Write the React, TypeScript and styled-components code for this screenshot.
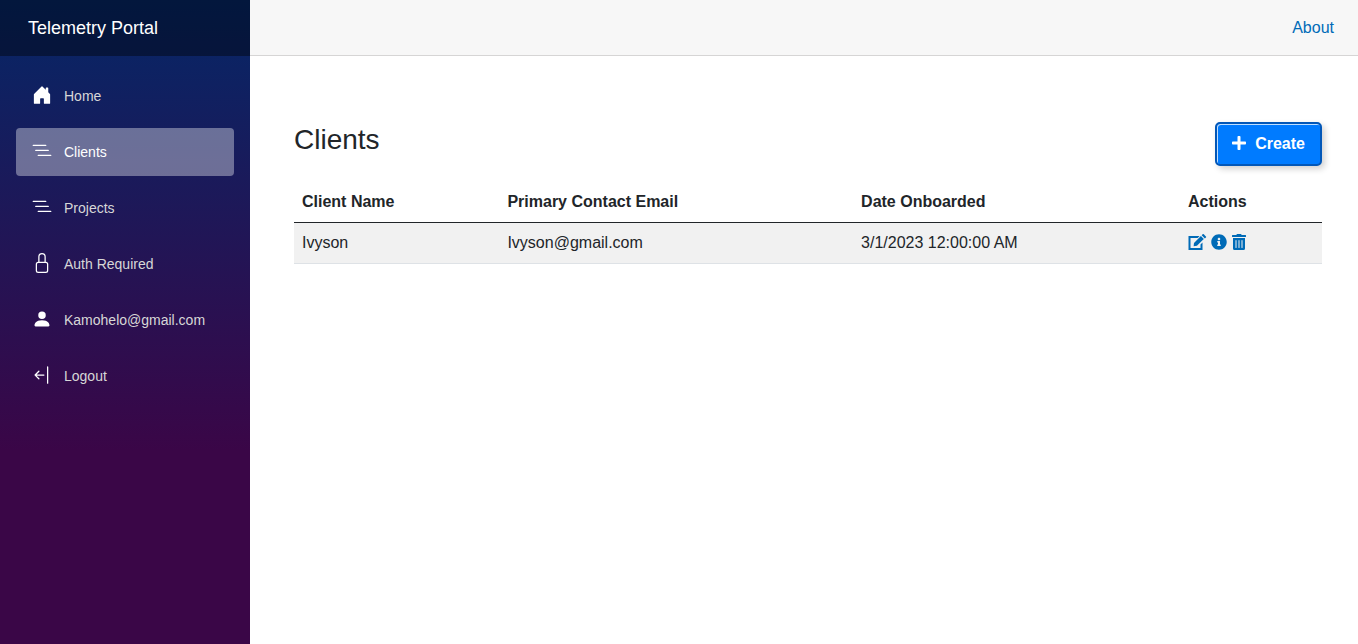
import React from "react";
import styled, { createGlobalStyle, css } from "styled-components";
import { BsArrowBarLeft, BsHouseDoorFill, BsListNested, BsLock, BsPersonFill } from "react-icons/bs";
import { FaInfoCircle, FaPlus, FaTrashAlt } from "react-icons/fa";

const GlobalStyle = createGlobalStyle`
  *, *::before, *::after { box-sizing: border-box; }
  body {
    margin: 0;
    font-family: "Liberation Sans", Arial, sans-serif;
    font-size: 16px;
    line-height: 24px;
    color: #212529;
    background: #fff;
  }
`;

const Page = styled.div`
  display: flex;
  min-height: 100vh;
`;

const Sidebar = styled.aside`
  flex: 0 0 250px;
  background-image: linear-gradient(180deg, rgb(5, 39, 103) 0%, #3a0647 70%);
`;

const BrandBar = styled.div`
  display: flex;
  align-items: center;
  height: 56px;
  padding: 0 28px;
  background: rgba(0, 0, 0, 0.4);
`;

const Brand = styled.a`
  font-size: 18px;
  color: #fff;
  text-decoration: none;
`;

const NavList = styled.ul`
  display: grid;
  gap: 8px;
  margin: 0;
  padding: 16px;
  list-style: none;
`;

const NavLink = styled.a<{ $active?: boolean }>`
  display: flex;
  align-items: center;
  gap: 12px;
  height: 48px;
  padding: 0 16px;
  border-radius: 4px;
  font-size: 14px;
  color: #d7d7d7;
  text-decoration: none;
  ${(p) =>
    p.$active &&
    css`
      color: #fff;
      background: rgba(255, 255, 255, 0.37);
    `}

  svg {
    width: 20px;
    height: 20px;
    margin-bottom: 2px;
    color: #fff;
  }
`;

const Main = styled.main`
  flex: 1;
  min-width: 0;
`;

const TopRow = styled.header`
  display: flex;
  align-items: center;
  justify-content: flex-end;
  height: 56px;
  padding: 0 24px;
  background: #f7f7f7;
  border-bottom: 1px solid #d6d5d5;
`;

const TextLink = styled.a`
  color: #006bb7;
  text-decoration: none;
`;

const Content = styled.article`
  padding: 66px 36px 24px 44px;
`;

const TitleRow = styled.div`
  display: flex;
  justify-content: space-between;
  align-items: flex-start;
  margin-bottom: 16px;
`;

const Title = styled.h3`
  margin: 0;
  font-size: 28px;
  line-height: 36px;
  font-weight: 400;
`;

const CreateButton = styled.button`
  display: flex;
  align-items: center;
  gap: 8px;
  height: 44px;
  padding: 0 15px 0 14px;
  border: 2px solid #0257b8;
  border-radius: 5px;
  font: inherit;
  font-weight: 700;
  color: #fff;
  background: #007bff;
  box-shadow: inset 1px 1px 0 rgba(255, 255, 255, 0.75), 3px 3px 6px rgba(0, 0, 0, 0.18);

  svg {
    margin-bottom: 2px;
  }
`;

const Table = styled.table`
  width: 100%;
  border-collapse: collapse;
  text-align: left;

  th,
  td {
    padding: 8px;
    border-bottom: 1px solid #dee2e6;
  }

  thead th {
    border-bottom-color: #212529;
  }

  tbody tr:nth-of-type(odd) {
    background: #f1f1f1;
  }
`;

const Actions = styled.div`
  display: flex;
  align-items: center;
  gap: 4px;
  height: 24px;
  padding-bottom: 2px;
`;

const ActionLink = styled(TextLink)`
  display: flex;
`;

const EditIcon = () => (
  <svg width="19" height="16" viewBox="0 0 19 16" fill="currentColor" aria-hidden="true">
    <path d="M.5 2H11.6L9.6 4H2.5V14H12.5V10.6L14.5 8.6V16H.5Z" />
    <path d="M6 8.9L12.9 2L15.8 4.9L8.9 11.8L5.6 12.2Z" />
    <path d="M13.7 1.2L14.6.3Q15.2-.2 15.8.3L17.9 2.4Q18.5 3 17.9 3.6L16.9 4.4Z" />
  </svg>
);

const navItems = [
  { label: "Home", Icon: BsHouseDoorFill },
  { label: "Clients", Icon: BsListNested, active: true },
  { label: "Projects", Icon: BsListNested },
  { label: "Auth Required", Icon: BsLock },
  { label: "Kamohelo@gmail.com", Icon: BsPersonFill },
  { label: "Logout", Icon: BsArrowBarLeft },
];

const clients = [{ name: "Ivyson", email: "Ivyson@gmail.com", onboarded: "3/1/2023 12:00:00 AM" }];

export default function App() {
  return (
    <Page>
      <GlobalStyle />
      <Sidebar>
        <BrandBar>
          <Brand href="#">Telemetry Portal</Brand>
        </BrandBar>
        <nav>
          <NavList>
            {navItems.map(({ label, Icon, active }) => (
              <li key={label}>
                <NavLink href="#" $active={active} aria-current={active ? "page" : undefined}>
                  <Icon aria-hidden />
                  {label}
                </NavLink>
              </li>
            ))}
          </NavList>
        </nav>
      </Sidebar>
      <Main>
        <TopRow>
          <TextLink href="#">About</TextLink>
        </TopRow>
        <Content>
          <TitleRow>
            <Title>Clients</Title>
            <CreateButton type="button">
              <FaPlus aria-hidden />
              Create
            </CreateButton>
          </TitleRow>
          <Table>
            <thead>
              <tr>
                <th>Client Name</th>
                <th>Primary Contact Email</th>
                <th>Date Onboarded</th>
                <th>Actions</th>
              </tr>
            </thead>
            <tbody>
              {clients.map((c) => (
                <tr key={c.email}>
                  <td>{c.name}</td>
                  <td>{c.email}</td>
                  <td>{c.onboarded}</td>
                  <td>
                    <Actions>
                      <ActionLink href="#" aria-label="Edit">
                        <EditIcon />
                      </ActionLink>
                      <ActionLink href="#" aria-label="Details">
                        <FaInfoCircle size={16} />
                      </ActionLink>
                      <ActionLink href="#" aria-label="Delete">
                        <FaTrashAlt size={16} />
                      </ActionLink>
                    </Actions>
                  </td>
                </tr>
              ))}
            </tbody>
          </Table>
        </Content>
      </Main>
    </Page>
  );
}
